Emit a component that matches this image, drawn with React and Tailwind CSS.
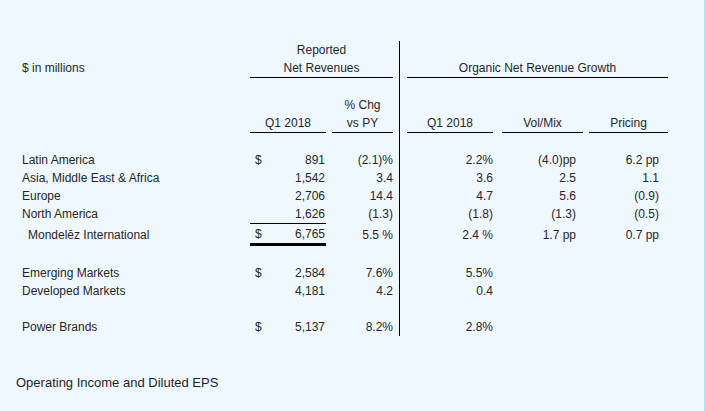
import React from "react";

const Sep = () => (
  <div className="w-[14px] pl-[6px] flex">
    <div className="w-px bg-black" />
  </div>
);

function DataRow({ label, indent, dollar, value, chg, org, vol, price, h = "h-[18px]", extra = "" }) {
  return (
    <div className={`flex ${h}`}>
      <div className={`w-[250px] flex items-center ${indent ? "pl-[28px]" : "pl-[22px]"}`}>{label}</div>
      <div className={`w-[76px] flex items-center justify-between pl-[5px] pr-[1px] ${extra}`}>
        <span>{dollar ? "$" : ""}</span>
        <span>{value}</span>
      </div>
      <div className="w-[6px]" />
      <div className="w-[61px] flex items-center justify-end">{chg}</div>
      <Sep />
      <div className="w-[86px] flex items-center justify-end">{org}</div>
      <div className="w-[9px]" />
      <div className="w-[81px] flex items-center justify-end pr-[7px]">{vol}</div>
      <div className="w-[6px]" />
      <div className="w-[79px] flex items-center justify-end pr-[9px]">{price}</div>
    </div>
  );
}

function Spacer({ h }) {
  return (
    <div className={`flex ${h}`}>
      <div className="w-[393px]" />
      <Sep />
    </div>
  );
}

export default function App() {
  return (
    <div
      className="w-[706px] h-[411px] bg-[#f0f8ff] border-r-2 border-[#a9e7f3] text-[12px] leading-[18px] text-[#262626] overflow-hidden"
      style={{ fontFamily: '"Liberation Sans", Arial, sans-serif' }}
    >
      <div className="pt-[41px]">
        {/* Header row 1a */}
        <div className="flex h-[18px]">
          <div className="w-[250px]" />
          <div className="w-[143px] text-center">Reported</div>
          <Sep />
        </div>
        {/* Header row 1b */}
        <div className="flex h-[19px]">
          <div className="w-[250px] pl-[22px]">$ in millions</div>
          <div className="w-[143px] text-center border-b border-black">Net Revenues</div>
          <Sep />
          <div className="w-[261px] text-center border-b border-black">Organic Net Revenue Growth</div>
        </div>
        <Spacer h="h-[18px]" />
        {/* Header row 2a */}
        <div className="flex h-[18px]">
          <div className="w-[250px]" />
          <div className="w-[76px]" />
          <div className="w-[6px]" />
          <div className="w-[61px] text-center">% Chg</div>
          <Sep />
        </div>
        {/* Header row 2b */}
        <div className="flex h-[19px]">
          <div className="w-[250px]" />
          <div className="w-[76px] text-center border-b border-black">Q1 2018</div>
          <div className="w-[6px]" />
          <div className="w-[61px] text-center border-b border-black">vs PY</div>
          <Sep />
          <div className="w-[86px] text-center border-b border-black">Q1 2018</div>
          <div className="w-[9px]" />
          <div className="w-[81px] text-center border-b border-black">Vol/Mix</div>
          <div className="w-[6px]" />
          <div className="w-[79px] text-center border-b border-black">Pricing</div>
        </div>
        <Spacer h="h-[18px]" />
        <DataRow label="Latin America" dollar value="891" chg="(2.1)%" org="2.2%" vol="(4.0)pp" price="6.2 pp" />
        <DataRow label="Asia, Middle East & Africa" value="1,542" chg="3.4" org="3.6" vol="2.5" price="1.1" />
        <DataRow label="Europe" value="2,706" chg="14.4" org="4.7" vol="5.6" price="(0.9)" />
        <DataRow label="North America" value="1,626" chg="(1.3)" org="(1.8)" vol="(1.3)" price="(0.5)" />
        <DataRow
          label="Mondelēz International"
          indent
          dollar
          value="6,765"
          chg="5.5 %"
          org="2.4 %"
          vol="1.7 pp"
          price="0.7 pp"
          h="h-[23px]"
          extra="border-t border-b-[3px] border-b-double border-black"
        />
        <Spacer h="h-[18px]" />
        <DataRow label="Emerging Markets" dollar value="2,584" chg="7.6%" org="5.5%" />
        <DataRow label="Developed Markets" value="4,181" chg="4.2" org="0.4" />
        <Spacer h="h-[18px]" />
        <DataRow label="Power Brands" dollar value="5,137" chg="8.2%" org="2.8%" />
      </div>
      <div className="pl-[16px] pt-[38px] text-[13px] leading-[18px] text-[#1f1f1f]">
        Operating Income and Diluted EPS
      </div>
    </div>
  );
}
